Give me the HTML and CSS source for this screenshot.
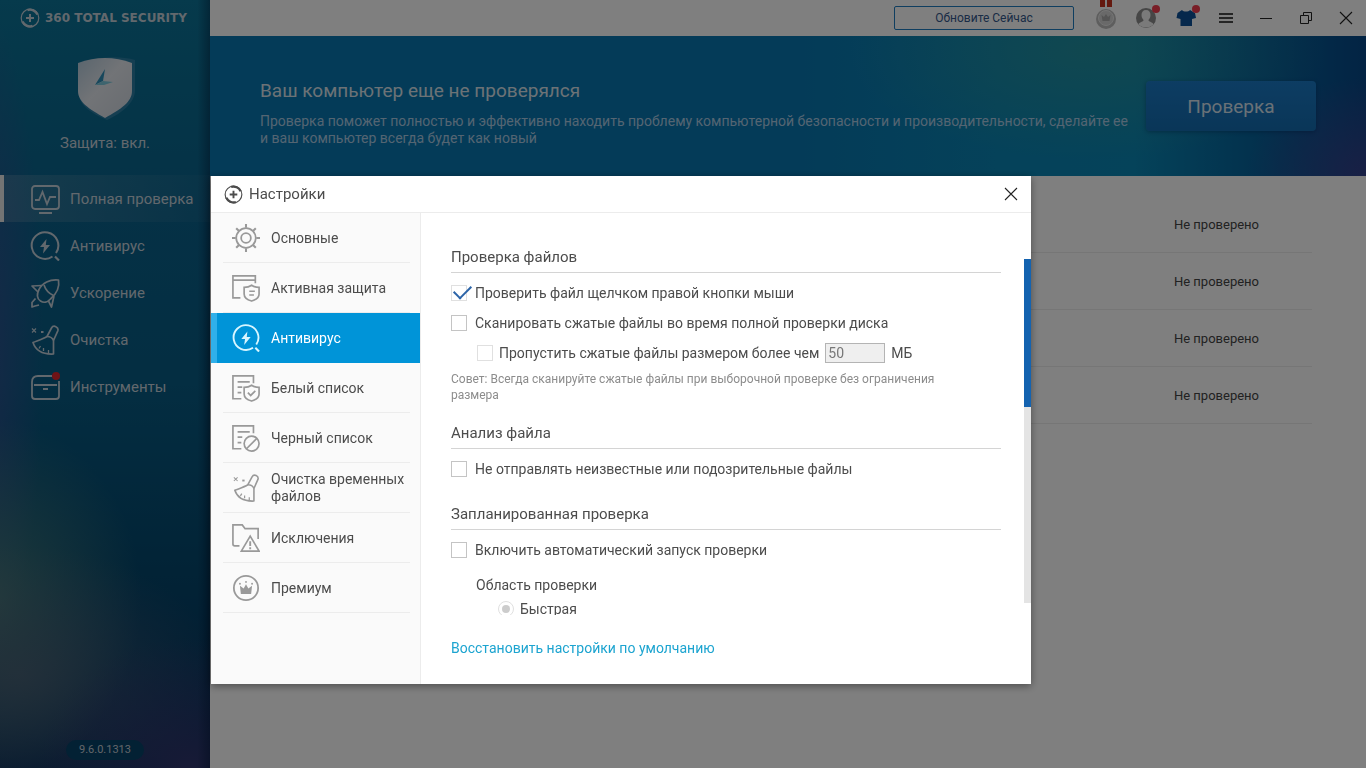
FILE: index.html
```html
<!DOCTYPE html>
<html lang="ru">
<head>
    <meta charset="UTF-8">
    <meta name="viewport" content="width=device-width, initial-scale=1.0">
    <title>360 Total Security</title>
    <link rel="stylesheet" href="styles.css">
</head>
<body>

<!-- Shared icons -->
<svg class="sprite" aria-hidden="true">
    <symbol id="icon-logo" viewBox="0 0 20 20">
        <circle cx="10" cy="10" r="8.8" fill="none" stroke="currentColor" stroke-width="1.200"/>
        <path d="M7.500 2A8.300 8.300 0 0 1 17.500 6.500M12.500 18A8.300 8.300 0 0 1 2.500 13.500" fill="none" stroke="currentColor" stroke-width="2.400"/>
        <path d="M10 6v8M6 10h8" stroke="currentColor" stroke-width="2"/>
    </symbol>
    <symbol id="icon-antivirus" viewBox="0 0 30 30">
        <path d="M22.500 25.500A13.300 13.300 0 1 1 26 22" fill="none" stroke="currentColor" stroke-width="2"/>
        <path d="M25 25.500l4 4" stroke="currentColor" stroke-width="2.200"/>
        <path d="M16.500 8l-6.500 8h4l-1 6.500 7-8.500h-4.200z" fill="currentColor"/>
    </symbol>
    <symbol id="icon-broom" viewBox="0 0 30 30">
        <g fill="none" stroke="currentColor" stroke-width="1.700" stroke-linejoin="round">
            <path d="M17 11.500l4.500-8.500c2-3.500 7.500-1 6.300 2.800L23.500 15.500c-1-2.500-3.500-4-6.500-4z"/>
            <path d="M17 11.500C13 14 8 15.500 3 17.500c2.500 7.500 9.500 12 20.500 11.500v-13.500"/>
            <path d="M9 23.500l1.500-2.500M13.500 26v-3M18.500 28v-3" stroke-width="1.300"/>
            <path d="M2 3.500l4 4M6 3.500l-4 4" stroke-width="1.100"/>
            <path d="M11 7h2.500" stroke-width="2"/>
        </g>
    </symbol>
    <symbol id="icon-close" viewBox="0 0 14 14">
        <path d="M1 1l12 12M13 1L1 13" stroke="currentColor" stroke-width="1.100"/>
    </symbol>
</svg>

<div class="app">
    <!-- Main sidebar -->
    <aside class="sidebar">
        <div class="brand">
            <svg class="brand-icon"><use href="#icon-logo"/></svg>
            <span>360 TOTAL SECURITY</span>
        </div>
        <div class="protection">
            <svg width="64" height="68" viewBox="0 0 64 68">
                <defs>
                    <linearGradient id="shield" x1="0" y1="0" x2="1" y2="1">
                        <stop offset="0" stop-color="#b4cbdc"/>
                        <stop offset=".45" stop-color="#e4e8ee"/>
                        <stop offset="1" stop-color="#d0d7e0"/>
                    </linearGradient>
                </defs>
                <path d="M7 10C20 3 46 1 62 6v30c0 13-13 23-28 30C19 60 6 51 6 40z" fill="#4a8db4" opacity=".5"/>
                <path d="M5 9Q32-1 59 9v28c0 11-11 18-27 27C16 55 5 48 5 37z" fill="url(#shield)"/>
                <path d="M32 15L22 31l8-4z" fill="#2f8fb8"/>
                <path d="M22 31l8-4 10 1-9 3z" fill="#7cc8dc"/>
            </svg>
            <p>Защита: вкл.</p>
        </div>
        <nav>
            <ul class="menu">
                <li class="active"><a href="#">
                    <svg viewBox="0 0 30 30" fill="none" stroke="currentColor" stroke-width="1.800">
                        <rect x="2" y="2" width="27" height="23" rx="3"/>
                        <path d="M5 16h4l3.500-8 4.500 12 3-7h6M9 29h13"/>
                    </svg>
                    Полная проверка</a></li>
                <li><a href="#"><svg><use href="#icon-antivirus"/></svg>Антивирус</a></li>
                <li><a href="#">
                    <svg viewBox="0 0 30 30" fill="none" stroke="currentColor" stroke-width="1.700" stroke-linejoin="round">
                        <path d="M28.500 2C20 1 12 5 9 11.500c-3 6-1.500 9.500 1.500 11.500s7 1.500 10-2C25 17 30 10 28.500 2z"/>
                        <path d="M12 7.500L2 8l6 6M18.500 23l3 6 2.500-11M14 7c2 6 6 9 9.500 10.500"/>
                        <path d="M5.500 20.500L2 24.500V29l3-1 4-1"/>
                    </svg>
                    Ускорение</a></li>
                <li><a href="#"><svg><use href="#icon-broom"/></svg>Очистка</a></li>
                <li><a href="#">
                    <svg viewBox="0 0 30 30" fill="none" stroke="currentColor" stroke-width="1.800">
                        <path d="M22 4H8C4 4 2 6 2 10v14c0 2 1 3 3 3h21c2 0 3-1 3-3V9M4 13h23M13 17h5"/>
                        <circle cx="26" cy="4" r="4" fill="#e0262d" stroke="none"/>
                    </svg>
                    Инструменты</a></li>
            </ul>
        </nav>
        <span class="version">9.6.0.1313</span>
    </aside>

    <main class="main">
        <header class="topbar">
            <button class="update-btn" type="button">Обновите Сейчас</button>
            <div class="window-buttons">
                <button type="button" aria-label="Награды">
                    <svg width="22" height="36" viewBox="0 0 22 36">
                        <path d="M5 0h5v7H5zM12 0h5v7h-5z" fill="#c8321e"/>
                        <circle cx="11" cy="19" r="10" fill="#bcbcbc"/>
                        <circle cx="11" cy="18" r="7.500" fill="#d2d2d2" stroke="#e8e8e8"/>
                        <path d="M6.500 15l2.500 2 2-3 2 3 2.500-2-1 6h-7z" fill="#aaa"/>
                    </svg>
                </button>
                <button type="button" aria-label="Профиль">
                    <svg width="28" height="36" viewBox="0 0 28 36">
                        <circle cx="14" cy="18" r="10" fill="#8c8c8c"/>
                        <path d="M14 10c-3 0-4.500 2-4.500 5s1.500 4 2 5c.2 2-4.500 1.800-5 4.500 4 4 11 4 15 0-.5-2.700-5.200-2.500-5-4.500.5-1 2-2 2-5s-1.500-5-4.500-5z" fill="#f4f4f4"/>
                        <circle cx="24" cy="9" r="4" fill="#f23c4e"/>
                    </svg>
                </button>
                <button type="button" aria-label="Темы">
                    <svg width="28" height="36" viewBox="0 0 28 36">
                        <path d="M10 10c1.500 2 6.500 2 8 0l5 3 1 5-4 1v7H8.500v-7l-4-1 1-5z" fill="#0c5098"/>
                        <circle cx="24" cy="9" r="4" fill="#f23c4e"/>
                    </svg>
                </button>
                <button type="button" aria-label="Меню">
                    <svg width="14" height="12" viewBox="0 0 14 12"><path d="M0 2h14M0 6h14M0 10h14" stroke="#111" stroke-width="1.600"/></svg>
                </button>
                <button type="button" aria-label="Свернуть">
                    <svg width="12" height="12" viewBox="0 0 12 12"><path d="M0 6.500h12" stroke="#222"/></svg>
                </button>
                <button type="button" aria-label="Развернуть">
                    <svg width="14" height="14" viewBox="0 0 14 14" fill="none" stroke="#222"><path d="M1.500 4.500h8v8h-8zM4.500 4.500v-3h8v8h-3"/></svg>
                </button>
                <button type="button" aria-label="Закрыть">
                    <svg width="14" height="14"><use href="#icon-close"/></svg>
                </button>
            </div>
        </header>

        <section class="banner">
            <div class="banner-text">
                <h1>Ваш компьютер еще не проверялся</h1>
                <p>Проверка поможет полностью и эффективно находить проблему компьютерной безопасности и производительности, сделайте ее и ваш компьютер всегда будет как новый</p>
            </div>
            <button class="scan-btn" type="button">Проверка</button>
        </section>

        <ul class="results">
            <li>Не проверено</li>
            <li>Не проверено</li>
            <li>Не проверено</li>
            <li>Не проверено</li>
        </ul>
    </main>
</div>

<!-- Settings window -->
<div class="overlay">
    <div class="dialog" role="dialog" aria-labelledby="dialog-title">
        <header class="dialog-header">
            <svg class="dialog-logo"><use href="#icon-logo"/></svg>
            <span id="dialog-title">Настройки</span>
            <button class="dialog-close" type="button" aria-label="Закрыть"><svg width="14" height="14"><use href="#icon-close"/></svg></button>
        </header>
        <div class="dialog-body">
            <ul class="tabs">
                <li><a href="#">
                    <svg viewBox="0 0 30 30" fill="none" stroke="currentColor" stroke-width="1.900">
                        <circle cx="15" cy="15" r="10.500"/><circle cx="15" cy="15" r="5.200"/>
                        <path d="M15 0v4M15 26v4M0 15h4M26 15h4M4.500 4.500l3 3M22.500 22.500l3 3M4.500 25.500l3-3M22.500 7.500l3-3" stroke-width="2.200"/>
                    </svg>
                    Основные</a></li>
                <li><a href="#">
                    <svg viewBox="0 0 30 30" fill="none" stroke="currentColor" stroke-width="1.800">
                        <path d="M9 25.500H1V2h24v8M1 6.500h24"/>
                        <path d="M21 12c2.500 1.800 5 2.300 8 2.300v7c0 4-4 6.500-8 7.700-4-1.200-8-3.700-8-7.700v-7c3 0 5.500-.5 8-2.300zM18.500 18.500h6M18.500 22.500h5"/>
                    </svg>
                    Активная защита</a></li>
                <li class="active"><a href="#"><svg><use href="#icon-antivirus"/></svg>Антивирус</a></li>
                <li><a href="#">
                    <svg viewBox="0 0 30 30" fill="none" stroke="currentColor" stroke-width="1.800">
                        <path d="M10 26.500H1V2h22v8M6 8.500h13M6 14h5M6 20h4"/>
                        <path d="M21 12c2.500 1.800 5 2.300 8 2.300v7c0 4-4 6.500-8 7.700-4-1.200-8-3.700-8-7.700v-7c3 0 5.500-.5 8-2.300zM17 20l3 3 5-5"/>
                    </svg>
                    Белый список</a></li>
                <li><a href="#">
                    <svg viewBox="0 0 30 30" fill="none" stroke="currentColor" stroke-width="1.800">
                        <path d="M10 26.500H1V2h22v8M6 8.500h13M6 14h5M6 20h4"/>
                        <circle cx="21" cy="21" r="8"/><path d="M15.500 26.500l11-11"/>
                    </svg>
                    Черный список</a></li>
                <li><a href="#"><svg><use href="#icon-broom"/></svg>Очистка временных файлов</a></li>
                <li><a href="#">
                    <svg viewBox="0 0 30 30" fill="none" stroke="currentColor" stroke-width="1.800">
                        <path d="M8 23.500H3c-1.500 0-2-.5-2-2V1h10l3 4h14v11"/>
                        <path d="M19.500 13L29 29H10z"/><path d="M19.500 18.500v5M19.500 25v2" stroke-width="2"/>
                    </svg>
                    Исключения</a></li>
                <li><a href="#">
                    <svg viewBox="0 0 30 30">
                        <circle cx="15" cy="15" r="13" fill="none" stroke="currentColor" stroke-width="1.900"/>
                        <path d="M8.500 12.500l4 3 2.500-4.500 2.500 4.500 4-3-1 9h-11z" fill="currentColor"/>
                        <circle cx="8.500" cy="10.500" r="1" fill="currentColor"/><circle cx="15" cy="8.500" r="1" fill="currentColor"/><circle cx="21.500" cy="10.500" r="1" fill="currentColor"/>
                    </svg>
                    Премиум</a></li>
            </ul>

            <div class="pane">
                <div class="pane-view">
                    <form class="options">
                        <h2>Проверка файлов</h2>
                        <div class="option">
                            <input type="checkbox" id="right-click" checked>
                            <label for="right-click">Проверить файл щелчком правой кнопки мыши</label>
                        </div>
                        <div class="option">
                            <input type="checkbox" id="archives">
                            <label for="archives">Сканировать сжатые файлы во время полной проверки диска</label>
                        </div>
                        <div class="option nested">
                            <input type="checkbox" id="skip-large" disabled>
                            <label for="skip-large">Пропустить сжатые файлы размером более чем</label>
                            <input class="size-field" type="text" id="size" value="50" disabled>
                            <label for="size">МБ</label>
                        </div>
                        <p class="tip">Совет: Всегда сканируйте сжатые файлы при выборочной проверке без ограничения размера</p>

                        <h2>Анализ файла</h2>
                        <div class="option">
                            <input type="checkbox" id="no-upload">
                            <label for="no-upload">Не отправлять неизвестные или подозрительные файлы</label>
                        </div>

                        <h2>Запланированная проверка</h2>
                        <div class="option">
                            <input type="checkbox" id="schedule">
                            <label for="schedule">Включить автоматический запуск проверки</label>
                        </div>
                        <fieldset class="scope">
                            <legend>Область проверки</legend>
                            <div class="scope-option">
                                <input type="radio" name="scope" id="scope-fast" checked disabled>
                                <label for="scope-fast">Быстрая</label>
                            </div>
                        </fieldset>
                    </form>
                    <div class="scrollbar"><div class="scrollbar-thumb"></div></div>
                </div>
                <a class="restore" href="#">Восстановить настройки по умолчанию</a>
            </div>
        </div>
    </div>
</div>

</body>
</html>
```
FILE: styles.css
```css
* {
    box-sizing: border-box;
}

/* General Body Styling */
body {
    font-family: Roboto, "Liberation Sans", sans-serif;
    font-size: 14px;
    color: #4c4c4c;
    margin: 0;
    background-color: #fff;
}

ul {
    list-style: none;
    margin: 0;
    padding: 0;
}

h1, h2, p {
    margin: 0;
    font-weight: normal;
}

a {
    color: inherit;
    text-decoration: none;
}

button {
    font-family: inherit;
    cursor: pointer;
}

.sprite {
    position: absolute;
    width: 0;
    height: 0;
}

.app {
    display: flex;
    min-height: 100vh;
}

/* Main sidebar */
.sidebar {
    width: 210px;
    flex-shrink: 0;
    display: flex;
    flex-direction: column;
    color: #c4d0da;
    background:
        linear-gradient(90deg, rgba(0, 20, 50, 0) 94%, rgba(0, 20, 50, 0.4)),
        radial-gradient(ellipse 150px 130px at 90% 100%, rgba(64, 54, 116, 0.7), transparent),
        radial-gradient(ellipse 200px 130px at 10% 88%, rgba(90, 100, 120, 0.6), transparent),
        radial-gradient(ellipse 150px 180px at -4% 78%, rgba(84, 134, 124, 0.75), transparent),
        radial-gradient(ellipse 60px 340px at -8% 45%, rgba(60, 76, 146, 0.75), transparent),
        linear-gradient(180deg, #0c7498 0%, #0a6c92 12%, #0a628c 28%, #085c84 50%, #04466c 75%, #08305c 100%);
}

.brand {
    display: flex;
    align-items: center;
    gap: 5px;
    height: 36px;
    padding-left: 20px;
    font-family: "DejaVu Sans", sans-serif;
    font-size: 12px;
    font-weight: bold;
}

.brand-icon {
    width: 20px;
    height: 20px;
}

.protection {
    display: flex;
    flex-direction: column;
    align-items: center;
    height: 139px;
    padding-top: 18px;
    font-size: 15px;
    line-height: 20px;
}

.protection p {
    margin-top: 11px;
}

.menu a {
    display: flex;
    align-items: center;
    gap: 10px;
    height: 47px;
    padding-left: 30px;
    font-size: 15px;
}

.menu svg {
    width: 30px;
    height: 30px;
    overflow: visible;
}

.menu .active a {
    padding-left: 26px;
    border-left: 4px solid #e8e8e8;
    background: linear-gradient(90deg, rgba(130, 160, 180, 0.3), rgba(130, 160, 180, 0.05));
}

.version {
    margin: auto auto 8px;
    padding: 0 13px;
    border-radius: 10px;
    background: #064268;
    color: #c4ccd4;
    font-size: 11px;
    line-height: 20px;
}

/* Top bar */
.main {
    flex: 1;
    min-width: 0;
}

.topbar {
    display: flex;
    justify-content: flex-end;
    align-items: center;
    gap: 12px;
    height: 36px;
}

.update-btn {
    width: 180px;
    height: 24px;
    border: 1px solid #1e7cc0;
    border-radius: 2px;
    background: #fff;
    color: #34588c;
    font-size: 12px;
}

.window-buttons {
    display: flex;
}

.window-buttons button {
    display: flex;
    align-items: center;
    justify-content: center;
    width: 40px;
    height: 36px;
    padding: 0;
    border: 0;
    background: none;
    color: #222;
}

/* Banner */
.banner {
    display: flex;
    align-items: center;
    justify-content: space-between;
    gap: 12px;
    height: 140px;
    padding: 0 50px;
    background:
        radial-gradient(ellipse 120px 100px at 100% 100%, rgba(70, 60, 140, 0.7), transparent),
        radial-gradient(ellipse 240px 110px at 76% 10%, rgba(70, 160, 130, 0.4), transparent),
        linear-gradient(90deg, #0876b0 0%, #0876b0 50%, #0a84b4 68%, #0a86b4 80%, #06649c 90%, #064888 100%);
}

.banner-text {
    padding-top: 14px;
    color: #d8e4ec;
}

.banner h1 {
    font-size: 19px;
    line-height: 24px;
    margin-bottom: 10px;
}

.banner p {
    color: #a8cae4;
    font-size: 14px;
    line-height: 17px;
}

.scan-btn {
    width: 170px;
    height: 50px;
    flex-shrink: 0;
    border: 0;
    border-radius: 4px;
    background: linear-gradient(#1a7ac6, #146cb0);
    box-shadow: 0 1px 4px rgba(0, 30, 80, 0.4);
    color: #d4e2ee;
    font-size: 19px;
}

/* Scan results */
.results {
    padding: 20px 54px 0 30px;
}

.results li {
    display: flex;
    justify-content: flex-end;
    align-items: center;
    height: 57px;
    padding-right: 53px;
    border-bottom: 1px solid #ececec;
    color: #444;
    font-size: 13px;
}

/* Settings window */
.overlay {
    position: fixed;
    inset: 0;
    display: flex;
    align-items: flex-start;
    padding: 176px 0 0 211px;
    background: rgba(0, 0, 0, 0.5);
}

.dialog {
    flex: 1;
    max-width: 820px;
    background: #fff;
    box-shadow: 0 2px 8px rgba(0, 0, 0, 0.4);
}

.dialog-header {
    display: flex;
    align-items: center;
    gap: 6px;
    height: 37px;
    padding: 0 13px;
    border-bottom: 1px solid #ececec;
    font-size: 15px;
}

.dialog-logo {
    width: 19px;
    height: 19px;
}

.dialog-close {
    display: flex;
    margin-left: auto;
    padding: 0;
    border: 0;
    background: none;
    color: #222;
}

.dialog-body {
    display: flex;
}

/* Tabs */
.tabs {
    width: 210px;
    flex-shrink: 0;
    border-right: 1px solid #ececec;
    background: #fafafa;
}

.tabs li {
    padding: 0 10px 0 12px;
}

.tabs a {
    display: flex;
    align-items: center;
    gap: 11px;
    height: 50px;
    padding: 1px 0 0 9px;
    border-bottom: 1px solid #ececec;
    line-height: 17px;
}

.tabs svg {
    width: 28px;
    height: 28px;
    flex-shrink: 0;
    color: #999;
}

.tabs .active {
    padding-left: 6px;
    border-left: 6px solid #30b0ea;
    background: #0094d8;
    color: #fff;
}

.tabs .active a {
    border-color: transparent;
}

.tabs .active svg {
    color: #d8f6ff;
}

/* Options pane */
.pane {
    flex: 1;
    min-width: 0;
    padding: 30px 0 26px;
}

.pane-view {
    display: flex;
    height: 372px;
}

.options {
    flex: 1;
    padding: 0 23px 0 30px;
    overflow-y: auto;
    scrollbar-width: none;
}

.options h2 {
    margin: 16px 0 5px;
    border-bottom: 1px solid #d4d4d4;
    font-size: 15px;
    line-height: 29px;
}

.options h2:first-child {
    margin-top: 0;
}

.option,
.scope-option {
    display: flex;
    align-items: center;
    gap: 8px;
    height: 30px;
}

.nested {
    gap: 6px;
    padding-left: 26px;
}

input[type="checkbox"],
input[type="radio"] {
    appearance: none;
    width: 16px;
    height: 16px;
    margin: 0;
    border: 1px solid #c4c4c4;
    background: #fff;
}

input[type="checkbox"]:disabled,
input[type="checkbox"]:checked,
input[type="radio"]:disabled {
    border-color: #e0e0e0;
}

/* Check mark sticks out of the box */
input[type="checkbox"]:checked::after {
    content: "";
    display: block;
    width: 15px;
    height: 8px;
    margin: -1px 0 0 2px;
    border: solid #2c64a8;
    border-width: 0 0 2px 2px;
    transform: rotate(-45deg);
}

input[type="radio"] {
    border-radius: 50%;
}

input[type="radio"]:checked::after {
    content: "";
    display: block;
    width: 8px;
    height: 8px;
    margin: 3px;
    border-radius: 50%;
    background: #ccc;
}

.size-field {
    width: 60px;
    height: 20px;
    padding: 0 2px;
    border: 1px solid #b4b4b4;
    background: #efefef;
    color: #777;
    font-family: inherit;
    font-size: 14px;
}

.tip {
    margin-top: 3px;
    padding-right: 30px;
    color: #8c8c8c;
    font-size: 12px;
    line-height: 16px;
}

.scope {
    margin: 8px 0 0;
    padding: 0 0 0 25px;
    border: 0;
}

.scope legend {
    padding: 0;
    line-height: 24px;
}

.scope-option {
    height: 24px;
    padding-left: 22px;
    gap: 6px;
}

.scrollbar {
    width: 7px;
    margin: 16px 0 12px;
    background: #e4e4e4;
}

.scrollbar-thumb {
    height: 43%;
    background: #1463b0;
}

.restore {
    display: inline-block;
    margin: 23px 0 0 30px;
    color: #1ca4d0;
    line-height: 20px;
}
```
